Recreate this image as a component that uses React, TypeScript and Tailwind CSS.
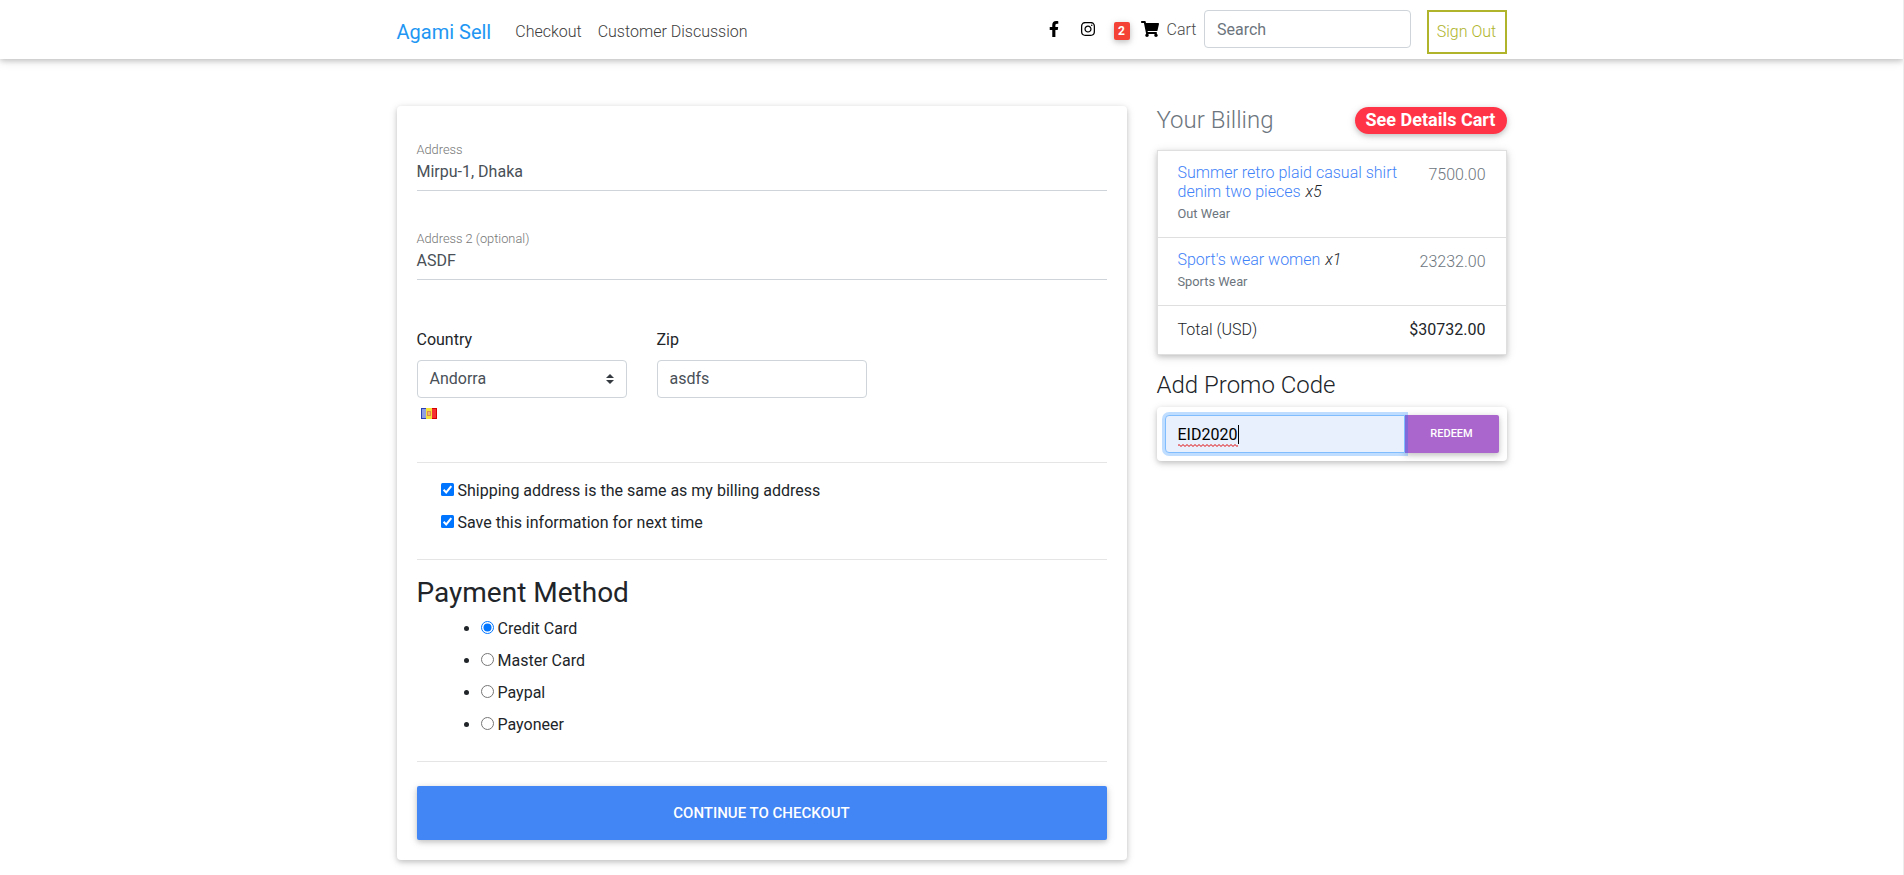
import React from "react";
import { FaFacebookF, FaInstagram, FaShoppingCart } from "react-icons/fa";

const cardShadow = "shadow-[0_2px_5px_0_rgba(0,0,0,0.16),0_2px_10px_0_rgba(0,0,0,0.12)]";

function Navbar() {
  return (
    <nav className="h-[59px] bg-white shadow-[0_2px_5px_0_rgba(0,0,0,0.16),0_2px_10px_0_rgba(0,0,0,0.12)]">
      <div className="mx-auto flex h-full w-[1110px] items-start">
        <a className="mt-[17px] text-xl leading-[30px] text-[#2196f3]">Agami Sell</a>
        <a className="mt-5 ml-6 font-light leading-6 text-[#3c3c3c]">Checkout</a>
        <a className="mt-5 ml-4 font-light leading-6 text-[#3c3c3c]">Customer Discussion</a>
        <div className="ml-auto flex items-start">
          <FaFacebookF className="mt-[21px] h-4 w-[10px] text-black" />
          <FaInstagram className="mt-[21px] ml-[21px] h-4 w-4 text-black" />
          <span className="mt-[22px] ml-[18px] flex h-[18px] w-4 items-center justify-center rounded-[2px] bg-[#f44336] text-xs font-bold text-white shadow-[0_2px_5px_0_rgba(0,0,0,0.16),0_2px_10px_0_rgba(0,0,0,0.12)]">
            2
          </span>
          <FaShoppingCart className="mt-[21px] ml-[11px] h-4 w-[18px] text-black" />
          <a className="mt-[18px] ml-2 w-[37px] font-light leading-6 text-[#4a4a4a]">Cart</a>
          <input
            className="mt-[10px] h-[38px] w-[207px] rounded border border-[#ced4da] bg-white px-[12.5px] text-base text-[#495057] outline-none placeholder:text-[#6c757d] placeholder:opacity-100"
            placeholder="Search"
          />
          <a className="mt-[10px] ml-4 flex h-11 w-20 items-center justify-center border-2 border-[#afb42b] font-light text-[#afb42b]">
            Sign Out
          </a>
        </div>
      </div>
    </nav>
  );
}

function Field({ label, value }: { label: string; value: string }) {
  return (
    <div className="mb-10 h-[49px] border-b border-[#ced4da]">
      <div className="h-[15px] text-[12.8px] font-light leading-[15px] text-[#757575]">{label}</div>
      <div className="mt-[3px] text-base leading-6 text-[#495057]">{value}</div>
    </div>
  );
}

function AndorraFlag() {
  return (
    <svg width="16" height="11" viewBox="0 0 16 11" className="mt-[10px] ml-1 block">
      <rect width="16" height="11" fill="#c9a21c" />
      <rect width="5" height="11" fill="#2b3fb5" />
      <rect x="1" y="1" width="4" height="9" fill="#8f9fe0" />
      <rect x="5" width="6" height="11" fill="#f2e23a" />
      <rect x="11" width="5" height="11" fill="#d80000" />
      <rect x="11" y="1" width="4" height="9" fill="#f33131" />
      <rect x="6" y="3" width="4" height="5" fill="#dd8a4a" />
      <rect x="7" y="4" width="2" height="3" fill="#e8b67c" />
    </svg>
  );
}

function Check({ label }: { label: string }) {
  return (
    <label className="flex h-8 items-start text-base leading-6 text-[#212529]">
      <svg width="13" height="13" viewBox="0 0 13 13" className="mt-1 mr-1 shrink-0">
        <rect width="13" height="13" rx="1.5" fill="#0075ff" />
        <path d="M2.6 6.8 5.2 9.4 10.3 3.2" fill="none" stroke="#fff" strokeWidth="2" />
      </svg>
      {label}
    </label>
  );
}

function Method({ label, checked = false }: { label: string; checked?: boolean }) {
  return (
    <li className="flex h-8 items-start text-base leading-6 text-[#212529]">
      <span className="mt-[9px] mr-3 h-[5px] w-[5px] rounded-full bg-[#212529]" />
      <svg width="13" height="13" viewBox="0 0 13 13" className="mt-1 mr-1 shrink-0">
        <circle cx="6.5" cy="6.5" r="6" fill="#fff" stroke={checked ? "#0075ff" : "#767676"} />
        {checked && <circle cx="6.5" cy="6.5" r="4" fill="#0075ff" />}
      </svg>
      {label}
    </li>
  );
}

function CheckoutForm() {
  return (
    <section className={`h-[754px] w-[730px] rounded bg-white px-5 pt-9 ${cardShadow}`}>
      <Field label="Address" value="Mirpu-1, Dhaka" />
      <Field label="Address 2 (optional)" value="ASDF" />
      <div className="mt-12 flex gap-[30px]">
        <div className="w-[210px]">
          <div className="mb-2 text-base leading-6 text-[#212529]">Country</div>
          <div className="flex h-[38px] items-center justify-between rounded border border-[#ced4da] px-3 text-base text-[#495057]">
            Andorra
            <svg width="8" height="10" viewBox="0 0 4 5">
              <path fill="#343a40" d="M2 0L0 2h4zm0 5L0 3h4z" />
            </svg>
          </div>
          <AndorraFlag />
        </div>
        <div className="w-[210px]">
          <div className="mb-2 text-base leading-6 text-[#212529]">Zip</div>
          <div className="flex h-[38px] items-center rounded border border-[#ced4da] px-3 text-base text-[#495057]">
            asdfs
          </div>
        </div>
      </div>
      <hr className="mt-[43px] border-[#e5e5e5]" />
      <div className="mt-4 h-20 pl-6">
        <Check label="Shipping address is the same as my billing address" />
        <Check label="Save this information for next time" />
      </div>
      <hr className="border-[#e5e5e5]" />
      <h3 className="mt-4 text-[28px] leading-[34px] text-[#212529]">Payment Method</h3>
      <ul className="mt-[7px] h-[144px] pl-[47px]">
        <Method label="Credit Card" checked />
        <Method label="Master Card" />
        <Method label="Paypal" />
        <Method label="Payoneer" />
      </ul>
      <hr className="border-[#e5e5e5]" />
      <button className="mt-6 block h-[54px] w-full rounded-[2px] bg-[#4285f4] text-[15px] font-medium text-white shadow-[0_2px_5px_0_rgba(0,0,0,0.16),0_2px_10px_0_rgba(0,0,0,0.12)]">
        CONTINUE TO CHECKOUT
      </button>
    </section>
  );
}

function SpellingMark() {
  return (
    <svg className="absolute top-[21px] left-0" width="60" height="3" viewBox="0 0 60 3">
      <defs>
        <pattern id="squiggle" width="4" height="3" patternUnits="userSpaceOnUse">
          <path d="M-1 3 1 1 3 3 5 1" transform="translate(0 -0.5)" fill="none" stroke="#e00000" strokeWidth="1" />
        </pattern>
      </defs>
      <rect width="60" height="3" fill="url(#squiggle)" />
    </svg>
  );
}

function Billing() {
  return (
    <aside className="w-[350px]">
      <div className="flex h-[44px] items-start justify-between">
        <h4 className="text-2xl font-light leading-[29px] text-[#6c757d]">Your Billing</h4>
        <span className="mt-px flex h-[27px] w-[152px] items-center justify-center rounded-full bg-[#ff3547] pb-px text-lg font-bold text-white shadow-[0_2px_5px_0_rgba(0,0,0,0.16),0_2px_10px_0_rgba(0,0,0,0.12)]">
          See Details Cart
        </span>
      </div>
      <ul className={`divide-y divide-[#dfdfdf] border border-[#dfdfdf] bg-white ${cardShadow}`}>
        <li className="flex h-[87px] justify-between px-5 pt-3 font-light">
          <div>
            <h6 className="w-[222px] text-base leading-[19.2px] text-[#212529]">
              <a className="text-[#3f82f8]">Summer retro plaid casual shirt denim two pieces</a>{" "}
              <i className="ml-px">x5</i>
            </h6>
            <div className="mt-[3px] text-[12.8px] font-normal leading-5 text-[#6c757d]">Out Wear</div>
          </div>
          <span className="leading-6 text-[#6c757d]">7500.00</span>
        </li>
        <li className="flex h-[68px] justify-between px-5 pt-3 font-light">
          <div>
            <h6 className="text-base leading-[19.2px] text-[#212529]">
              <a className="text-[#3f82f8]">Sport's wear women</a> <i className="ml-px">x1</i>
            </h6>
            <div className="mt-[3px] text-[12.8px] font-normal leading-5 text-[#6c757d]">Sports Wear</div>
          </div>
          <span className="leading-6 text-[#6c757d]">23232.00</span>
        </li>
        <li className="flex h-12 justify-between px-5 pt-3 font-light leading-6 text-[#212529]">
          <span>Total (USD)</span>
          <span className="font-normal">$30732.00</span>
        </li>
      </ul>
      <h4 className="mt-4 text-2xl font-light leading-[29px] text-[#212529]">Add Promo Code</h4>
      <div className={`mt-[7px] flex h-[54px] rounded bg-white p-2 ${cardShadow}`}>
        <div className="z-10 flex h-[38px] w-[240px] items-center rounded-l border border-[#80bdff] bg-[#e8f0fe] px-3 pt-px text-base leading-6 text-black shadow-[0_0_0_3px_rgba(0,123,255,0.25)]">
          <span className="relative">
            EID2020
            <SpellingMark />
          </span>
          <span className="ml-px h-[19px] w-px bg-black" />
        </div>
        <button className="h-[38px] w-[94px] rounded-r-[2px] bg-[#aa66cc] text-[11px] font-medium text-white shadow-[0_2px_5px_0_rgba(0,0,0,0.16),0_2px_10px_0_rgba(0,0,0,0.12)]">
          REDEEM
        </button>
      </div>
    </aside>
  );
}

export default function App() {
  return (
    <div className="h-[875px] overflow-hidden border-r border-[#ededed] bg-white font-[Roboto,sans-serif]">
      <Navbar />
      <main className="mx-auto mt-[47px] flex w-[1110px] items-start gap-[30px]">
        <CheckoutForm />
        <Billing />
      </main>
    </div>
  );
}
